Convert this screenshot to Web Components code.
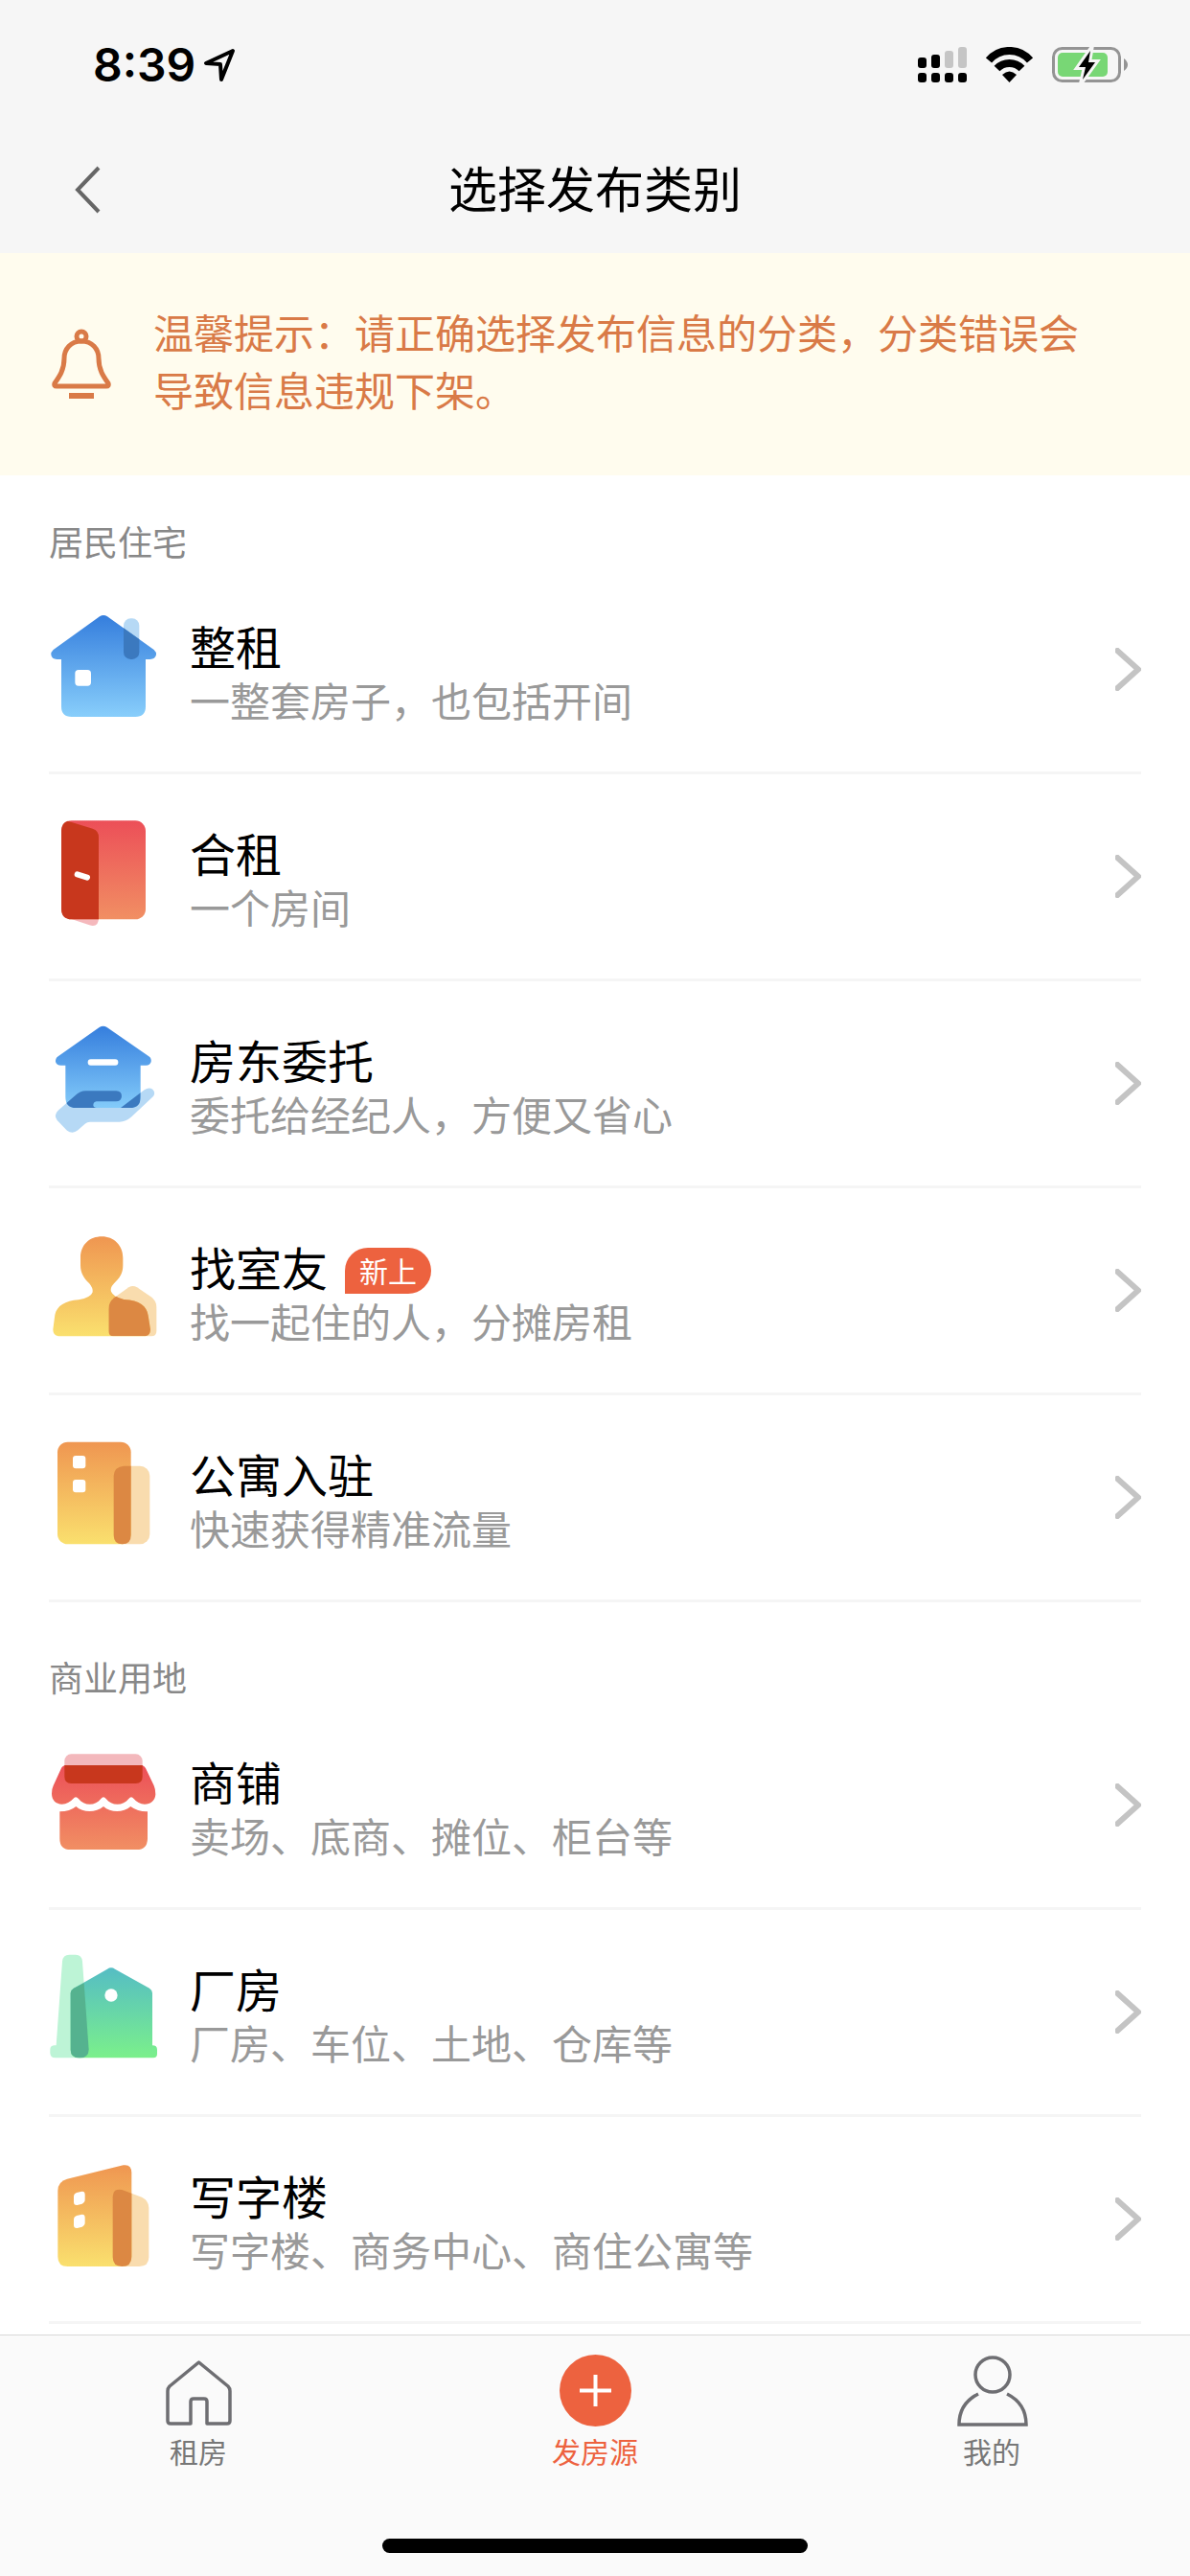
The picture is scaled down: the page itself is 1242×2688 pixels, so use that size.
<!DOCTYPE html>
<html lang="zh-CN">
<head>
<meta charset="utf-8">
<meta name="viewport" content="width=device-width, initial-scale=1">
<title>选择发布类别</title>
<style>
  body {
    margin: 0;
    font-family: "Liberation Sans", "Noto Sans CJK SC", sans-serif;
    color: #000;
    background: #fff;
  }
</style>
</head>
<body>
<x-app>
  <x-status-bar slot="top" time="8:39"></x-status-bar>
  <x-nav-bar slot="top">选择发布类别</x-nav-bar>
  <x-notice>温馨提示：请正确选择发布信息的分类，分类错误会导致信息违规下架。</x-notice>
  <x-group label="居民住宅">
    <x-category icon="house" name="整租">一整套房子，也包括开间</x-category>
    <x-category icon="door" name="合租">一个房间</x-category>
    <x-category icon="entrust" name="房东委托">委托给经纪人，方便又省心</x-category>
    <x-category icon="roommate" name="找室友" badge="新上">找一起住的人，分摊房租</x-category>
    <x-category icon="apartment" name="公寓入驻">快速获得精准流量</x-category>
  </x-group>
  <x-group label="商业用地">
    <x-category icon="shop" name="商铺">卖场、底商、摊位、柜台等</x-category>
    <x-category icon="factory" name="厂房">厂房、车位、土地、仓库等</x-category>
    <x-category icon="office" name="写字楼">写字楼、商务中心、商住公寓等</x-category>
  </x-group>
  <x-tab-bar slot="bottom">
    <x-tab icon="home">租房</x-tab>
    <x-tab icon="plus" active>发房源</x-tab>
    <x-tab icon="user">我的</x-tab>
  </x-tab-bar>
</x-app>

<script>
const gradient = (from, to) => `
  <defs>
    <linearGradient id="g" x1="0" y1="0" x2="0" y2="1">
      <stop offset="0" stop-color="${from}"/>
      <stop offset="1" stop-color="${to}"/>
    </linearGradient>
  </defs>
`;

const CATEGORY_ICONS = {
  house: `
    <svg viewBox="153 95 342 342">
      ${gradient('#357edd', '#88cefb')}
      <rect x="387" y="105" width="49" height="128" rx="22" fill="#b6d9f5"/>
      <path fill="url(#g)" d="M312 99Q324 91 336 99L482 203Q490 210 489 219Q486 233 470 233H456V381Q456 413 424 413H224Q192 413 192 381V233H178Q162 233 160 219Q159 210 167 203Z"/>
      <clipPath id="c"><path d="M312 99Q324 91 336 99L482 203Q490 210 489 219V413H160V219Q159 210 167 203Z"/></clipPath>
      <rect x="387" y="105" width="49" height="128" rx="22" fill="#3b79bf" clip-path="url(#c)"/>
      <rect x="235" y="266" width="50" height="50" rx="11" fill="#fff"/>
    </svg>`,
  door: `
    <svg viewBox="153 743 342 342">
      ${gradient('#ec4f58', '#f18f63')}
      <path fill="#f5b8bc" d="M212 1042L280 1065Q309 1073 309 1042Z"/>
      <rect x="192" y="738" width="264" height="309" rx="32" fill="url(#g)"/>
      <path fill="#c8371d" d="M212 739L290 763Q309 769 309 790V1047H224Q192 1047 192 1013V770Q193 743 212 739Z"/>
      <path stroke="#fff" stroke-width="18" stroke-linecap="round" d="M242 906L273 916"/>
    </svg>`,
  entrust: `
    <svg viewBox="153 131 342 342">
      ${gradient('#357edd', '#83cbfa')}
      <clipPath id="c"><path d="M205 240H440V343Q440 377 407 377H238Q205 377 205 343Z"/></clipPath>
      <path fill="#b6d9f5" d="M182 385L236 338Q250 324 268 324H364Q381 325 381 341Q380 357 363 357H302Q292 359 292 369Q293 377 303 377H378L452 321Q466 311 478 319Q488 329 480 341L412 405Q394 421 374 421H282Q273 421 266 427L244 447Q227 461 210 448L179 416Q167 400 182 385Z"/>
      <path fill="url(#g)" d="M311 125Q323 117 335 125L466 216Q475 222 473 233Q470 244 457 244H440V343Q440 377 407 377H238Q205 377 205 343V244H191Q177 244 174 233Q173 222 182 216Z"/>
      <path fill="#3b79bf" clip-path="url(#c)" d="M182 385L236 338Q250 324 268 324H364Q381 325 381 341Q380 357 363 357H302Q292 359 292 369Q293 377 303 377H378L452 321L480 341V385Z"/>
      <rect x="275" y="225" width="95" height="19" rx="9" fill="#fff"/>
    </svg>`,
  roommate: `
    <svg viewBox="153 119 342 342">
      ${gradient('#ef9651', '#fae06e')}
      <path fill="#f9dcae" d="M340 346Q340 326 357 312L403 279Q416 271 429 279L473 309Q490 321 490 341V416Q490 432 474 432H356Q340 432 340 416Z"/>
      <clipPath id="c"><path d="M340 346Q340 326 357 312L403 279Q416 271 429 279L473 309Q490 321 490 341V416Q490 432 474 432H356Q340 432 340 416Z"/></clipPath>
      <path fill="url(#g)" d="M252 187C252 145 281 120 319 120C356 120 385 147 385 187V210C385 236 375 249 357 267Q344 281 348 292Q355 309 388 317C438 320 459 337 464 367L471 411Q471 430 455 432H183Q166 430 166 411L172 365C178 337 204 321 246 318Q285 311 290 294Q292 281 279 266C262 250 252 234 252 209Z"/>
      <path fill="#dc8843" clip-path="url(#c)" d="M330 290H348Q355 309 388 317C438 320 459 337 464 367L471 411Q471 430 455 432H330Z"/>
    </svg>`,
  apartment: `
    <svg viewBox="153 767 342 342">
      ${gradient('#ef9651', '#fae06e')}
      <rect x="356" y="838" width="113" height="245" rx="31" fill="#f9dcae"/>
      <rect x="180" y="763" width="230" height="320" rx="32" fill="url(#g)"/>
      <path fill="#dc8843" d="M356 869Q358 840 388 838H410V1054Q410 1083 383 1083Q356 1083 356 1054Z"/>
      <rect x="228" y="806" width="40" height="40" rx="9" fill="#fff"/>
      <rect x="228" y="881" width="40" height="40" rx="9" fill="#fff"/>
    </svg>`,
  shop: `
    <svg viewBox="153 500 342 342">
      <defs>
        <linearGradient id="g" gradientUnits="userSpaceOnUse" x1="0" y1="545" x2="0" y2="809">
          <stop offset="0" stop-color="#ec4f58"/>
          <stop offset="1" stop-color="#f18f63"/>
        </linearGradient>
      </defs>
      <rect x="202" y="510" width="244" height="92" rx="21" fill="#f3b8bc"/>
      <path fill="url(#g)" d="M207 545H441Q452 546 457 556L482 609Q487 620 487 636C486 657 471 667 453 667Q432 666 419 650Q411 639 403 650C386 673 349 673 332 650Q324 639 316 650C299 673 263 673 246 650Q237 639 229 650Q215 666 194 667C175 666 162 654 162 634Q162 619 167 609L191 556Q196 545 207 545Z"/>
      <path fill="url(#g)" d="M187 690Q219 690 238 674C260 694 300 694 324 674C346 694 386 694 409 674Q432 691 462 690V775Q461 809 428 809H221Q187 809 187 775Z"/>
      <path fill="#c8371d" d="M202 545H446V581Q446 602 425 602H223Q202 602 202 581Z"/>
    </svg>`,
  factory: `
    <svg viewBox="153 38 342 342">
      ${gradient('#55bdc4', '#7bf08b')}
      <path fill="#bdf4d6" d="M195 49Q197 28 217 28H237Q256 28 258 49L278 325Q278 351 250 351H173Q157 351 157 336V325Q157 313 169 312H176Z"/>
      <path fill="url(#g)" d="M221 148Q222 138 231 133L336 73Q348 65 360 73L468 133Q476 138 477 148V312Q492 312 492 325V339Q492 351 480 351H247Q221 351 221 325Z"/>
      <path fill="#55b28f" d="M221 148Q222 138 231 133L263 117L278 325Q277 351 250 351Q221 351 221 325Z"/>
      <circle cx="348" cy="155" r="20" fill="#fff"/>
    </svg>`,
  office: `
    <svg viewBox="153 686 342 342">
      ${gradient('#ef9651', '#fae06e')}
      <path fill="#f9dcae" d="M353 785Q354 758 382 764L444 787Q466 798 466 820V975Q466 1004 436 1004H383Q353 1004 353 975Z"/>
      <path fill="url(#g)" d="M181 766Q182 738 210 730L386 687Q412 683 412 711V973Q411 1004 381 1004H212Q181 1004 181 973Z"/>
      <path fill="#dc8843" d="M353 785Q354 758 382 764L412 775V974Q412 1004 382 1004Q353 1004 353 975Z"/>
      <path fill="#fff" d="M231 786Q231 776 240 773L256 769Q266 768 266 779V795Q266 804 257 808L242 812Q231 813 231 803ZM231 858Q231 848 240 845L256 841Q266 840 266 851V867Q266 876 257 880L242 884Q231 885 231 875Z"/>
    </svg>`,
};

const TAB_ICONS = {
  home: `
    <svg viewBox="0 0 75 75" fill="none" stroke="#6e6e72" stroke-width="3.5" stroke-linejoin="round">
      <path d="M37.5 8L68 33Q70 35 70 38V69Q70 72 67 72H46V49Q46 46 43 46H32Q29 46 29 49V72H8Q5 72 5 69V38Q5 35 7 33Z"/>
    </svg>`,
  plus: `
    <svg viewBox="0 0 75 75">
      <circle cx="37.5" cy="37.5" r="37.5" fill="#ed623f"/>
      <path stroke="#fff" stroke-width="4" d="M21 37.5H54M37.5 21V54"/>
    </svg>`,
  user: `
    <svg viewBox="0 0 75 75" fill="none" stroke="#6e6e72" stroke-width="3.5">
      <circle cx="38" cy="21" r="18"/>
      <path d="M23 41C9 48 3 59 3 73H73C73 59 67 48 53 41"/>
    </svg>`,
};

class BaseElement extends HTMLElement {
  constructor() {
    super();
    this.attachShadow({ mode: 'open' });
  }
  connectedCallback() {
    const template = document.createElement('template');
    template.innerHTML = this.template();
    this.shadowRoot.replaceChildren(template.content.cloneNode(true));
  }
}

class AppElement extends BaseElement {
  template() {
    return `
      <style>
        :host {
          display: flex;
          flex-direction: column;
          min-height: 100vh;
        }
        header { background: #f6f6f6; }
        main { flex: 1; }
      </style>
      <header><slot name="top"></slot></header>
      <main><slot></slot></main>
      <slot name="bottom"></slot>
    `;
  }
}

class StatusBarElement extends BaseElement {
  template() {
    return `
      <style>
        :host {
          display: flex;
          align-items: center;
          justify-content: space-between;
          box-sizing: border-box;
          height: 132px;
          padding: 4px 64px 0 97px;
        }
        div {
          display: flex;
          align-items: center;
        }
        .left { gap: 8px; }
        .right { gap: 20px; }
        svg { display: block; }
        time {
          font: 600 48px/60px Inter, sans-serif;
        }
      </style>
      <div class="left">
        <time>${this.getAttribute('time')}</time>
        <svg width="34" height="38" viewBox="0 0 34 38" fill="none" stroke="#000" stroke-width="4" stroke-linejoin="round">
          <path d="M31 4L3 17L18 18L19 34Z"/>
        </svg>
      </div>
      <div class="right">
        <svg width="51" height="38" viewBox="0 0 51 38">
          <rect y="11" width="9" height="11" rx="3"/>
          <rect x="14" y="8" width="9" height="14" rx="3"/>
          <rect x="28" y="4" width="9" height="18" rx="3" fill="#c5c5c5"/>
          <rect x="42" width="9" height="22" rx="3" fill="#c5c5c5"/>
          <rect y="27" width="9" height="10" rx="3"/>
          <rect x="14" y="27" width="9" height="10" rx="3"/>
          <rect x="28" y="27" width="9" height="10" rx="3"/>
          <rect x="42" y="27" width="9" height="10" rx="3"/>
        </svg>
        <svg width="49" height="38" viewBox="0 0 49 38">
          <path fill="none" stroke="#000" stroke-width="8" d="M3 14A28 28 0 0 1 46 14M11.500 22.500A18 18 0 0 1 37.500 22.500"/>
          <path d="M17 29Q24.500 22 32 29L24.500 37Z"/>
        </svg>
        <svg width="80" height="38" viewBox="0 0 80 38">
          <rect x="1.500" y="1.500" width="69" height="34" rx="9" fill="none" stroke="#949494" stroke-width="3"/>
          <rect x="6" y="6" width="52" height="25" rx="5" fill="#78d775"/>
          <path fill="#949494" d="M75 12Q79 15 79 18.500T75 25Z"/>
          <path fill="#000" stroke="#f6f6f6" stroke-width="6" stroke-miterlimit="8" paint-order="stroke" d="M40 4L28 21H35L32 34L45 16H38Z"/>
        </svg>
      </div>
    `;
  }
}

class NavBarElement extends BaseElement {
  template() {
    return `
      <style>
        :host {
          display: grid;
          grid-template-columns: 1fr auto 1fr;
          align-items: center;
          height: 132px;
        }
        button {
          justify-self: start;
          padding: 0 0 0 76px;
          border: 0;
          background: none;
        }
        svg { display: block; }
        h1 {
          margin: 0;
          padding-top: 4px;
          font-size: 51px;
          font-weight: 400;
          line-height: 60px;
        }
      </style>
      <button type="button" aria-label="返回">
        <svg width="30" height="56" viewBox="0 0 30 56" fill="none" stroke="#666" stroke-width="4">
          <path d="M27 5L5 28L27 51"/>
        </svg>
      </button>
      <h1><slot></slot></h1>
    `;
  }
}

class NoticeElement extends BaseElement {
  template() {
    return `
      <style>
        :host {
          display: flex;
          align-items: center;
          gap: 44px;
          padding: 56px 99px 56px 54px;
          color: #d97a47;
          background: #fffcee;
        }
        svg { flex: none; }
        p {
          margin: 0;
          font-size: 42px;
          line-height: 60px;
        }
      </style>
      <svg width="62" height="74" viewBox="0 0 62 74" fill="none" stroke="currentColor" stroke-width="5">
        <circle cx="31" cy="8" r="5"/>
        <path stroke-linejoin="round" d="M31 13C20 13 13 21 13 31C13 43 8 50 3 57Q2 60 5 60H57Q60 60 59 57C54 50 49 43 49 31C49 21 42 13 31 13Z"/>
        <path stroke-width="6" d="M18 70H44"/>
      </svg>
      <p><slot></slot></p>
    `;
  }
}

class GroupElement extends BaseElement {
  template() {
    return `
      <style>
        :host {
          display: block;
          padding: 0 51px;
        }
        :host(:not(:first-of-type)) { margin-top: 9px; }
        h2 {
          margin: 0;
          padding-top: 48px;
          color: #888;
          font-size: 36px;
          font-weight: 400;
          line-height: 48px;
        }
      </style>
      <h2>${this.getAttribute('label')}</h2>
      <slot></slot>
    `;
  }
}

class CategoryElement extends BaseElement {
  template() {
    const badge = this.getAttribute('badge');
    return `
      <style>
        :host { display: block; }
        a {
          display: flex;
          align-items: center;
          box-sizing: border-box;
          min-height: 216px;
          border-bottom: 3px solid #f5f5f5;
          color: inherit;
          text-decoration: none;
        }
        .icon {
          width: 114px;
          margin-right: 33px;
        }
        .icon svg {
          display: block;
          overflow: visible;
        }
        .text {
          flex: 1;
          padding-top: 14px;
        }
        .name {
          display: flex;
          align-items: center;
          gap: 18px;
          font-size: 48px;
          line-height: 56px;
        }
        .badge {
          padding: 3px 15px 0;
          border-radius: 24px 24px 24px 0;
          color: #fff;
          background: #ed623f;
          font-size: 30px;
          line-height: 45px;
        }
        .description {
          color: #999;
          font-size: 42px;
          line-height: 56px;
        }
      </style>
      <a href="#${this.getAttribute('icon')}">
        <div class="icon">${CATEGORY_ICONS[this.getAttribute('icon')]}</div>
        <div class="text">
          <div class="name">
            <span>${this.getAttribute('name')}</span>
            ${badge ? `<span class="badge">${badge}</span>` : ''}
          </div>
          <div class="description"><slot></slot></div>
        </div>
        <svg width="27" height="45" viewBox="0 0 27 45" fill="none" stroke="#c4c4c4" stroke-width="6">
          <path d="M0 1L24 22.500L0 44"/>
        </svg>
      </a>
    `;
  }
}

class TabBarElement extends BaseElement {
  template() {
    return `
      <style>
        :host {
          display: flex;
          flex-direction: column;
          justify-content: space-between;
          align-items: center;
          box-sizing: border-box;
          min-height: 252px;
          padding: 20px 0 24px;
          border-top: 1px solid #d8d8d8;
          background: #fafafa;
        }
        nav {
          display: flex;
          align-self: stretch;
        }
        .indicator {
          width: 444px;
          height: 15px;
          border-radius: 8px;
          background: #000;
        }
      </style>
      <nav><slot></slot></nav>
      <div class="indicator"></div>
    `;
  }
}

class TabElement extends BaseElement {
  template() {
    return `
      <style>
        :host {
          flex: 1;
          color: #777;
        }
        :host([active]) { color: #ed623f; }
        a {
          display: flex;
          flex-direction: column;
          align-items: center;
          gap: 8px;
          color: inherit;
          font-size: 30px;
          line-height: 40px;
          text-decoration: none;
        }
        svg {
          display: block;
          width: 75px;
          height: 75px;
        }
      </style>
      <a href="#${this.getAttribute('icon')}">
        ${TAB_ICONS[this.getAttribute('icon')]}
        <span><slot></slot></span>
      </a>
    `;
  }
}

[
  ['x-app', AppElement],
  ['x-status-bar', StatusBarElement],
  ['x-nav-bar', NavBarElement],
  ['x-notice', NoticeElement],
  ['x-group', GroupElement],
  ['x-category', CategoryElement],
  ['x-tab-bar', TabBarElement],
  ['x-tab', TabElement],
].forEach(([name, element]) => window.customElements.define(name, element));
</script>
</body>
</html>
